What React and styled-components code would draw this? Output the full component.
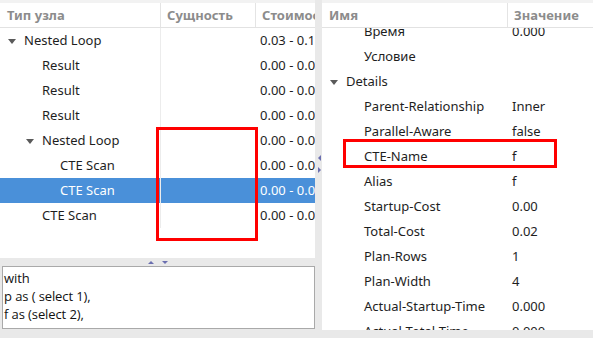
import { createGlobalStyle, styled } from 'styled-components';

const planRows = [
  { level: 0, open: true, name: 'Nested Loop', cost: '0.03 - 0.10' },
  { level: 1, name: 'Result', cost: '0.00 - 0.01' },
  { level: 1, name: 'Result', cost: '0.00 - 0.01' },
  { level: 1, name: 'Result', cost: '0.00 - 0.01' },
  { level: 1, open: true, name: 'Nested Loop', cost: '0.00 - 0.05' },
  { level: 2, name: 'CTE Scan', cost: '0.00 - 0.02' },
  { level: 2, name: 'CTE Scan', cost: '0.00 - 0.02', selected: true },
  { level: 1, name: 'CTE Scan', cost: '0.00 - 0.02' },
];

const props = [
  { level: 1, name: 'Время', value: '0.000' },
  { level: 1, name: 'Условие', value: '' },
  { level: 0, open: true, name: 'Details', value: '' },
  { level: 1, name: 'Parent-Relationship', value: 'Inner' },
  { level: 1, name: 'Parallel-Aware', value: 'false' },
  { level: 1, name: 'CTE-Name', value: 'f' },
  { level: 1, name: 'Alias', value: 'f' },
  { level: 1, name: 'Startup-Cost', value: '0.00' },
  { level: 1, name: 'Total-Cost', value: '0.02' },
  { level: 1, name: 'Plan-Rows', value: '1' },
  { level: 1, name: 'Plan-Width', value: '4' },
  { level: 1, name: 'Actual-Startup-Time', value: '0.000' },
  { level: 1, name: 'Actual-Total-Time', value: '0.000' },
];

const sqlLines = ['with', 'p as ( select 1),', 'f as (select 2),', 'x as ('];

function App() {
  return (
    <>
      <GlobalStyle />
      <StyledWindow>
        <StyledLeftColumn>
          <StyledTreePanel>
            <StyledHeader>
              <StyledHeadCell $width={160}>Тип узла</StyledHeadCell>
              <StyledHeadCell $width={95}>Сущность</StyledHeadCell>
              <StyledHeadCell $width={90}>Стоимость</StyledHeadCell>
            </StyledHeader>
            <StyledBody>
              {planRows.map((row, i) => (
                <StyledRow key={i} $selected={row.selected}>
                  <StyledNameCell $width={160} $level={row.level}>
                    {row.open && <StyledArrow $selected={row.selected} />}
                    {row.name}
                  </StyledNameCell>
                  <StyledCell $width={95} $grid />
                  <StyledCell $width={90}>{row.cost}</StyledCell>
                </StyledRow>
              ))}
            </StyledBody>
            <StyledMarker className={'entity-marker'} />
          </StyledTreePanel>
          <StyledHSplitter>
            <StyledTriangle $dir={'up'} />
            <StyledTriangle $dir={'down'} />
          </StyledHSplitter>
          <StyledEditor>
            {sqlLines.map((line, i) => (
              <div key={i}>{line}</div>
            ))}
          </StyledEditor>
        </StyledLeftColumn>

        <StyledVSplitter>
          <StyledTriangle $dir={'left'} />
          <StyledTriangle $dir={'right'} />
        </StyledVSplitter>

        <StyledPropsPanel>
          <StyledHeader>
            <StyledHeadCell $width={185}>Имя</StyledHeadCell>
            <StyledHeadCell $width={100}>Значение</StyledHeadCell>
          </StyledHeader>
          <StyledBody>
            <StyledScrolled>
              {props.map((row, i) => (
                <StyledRow key={i}>
                  <StyledNameCell $width={185} $level={row.level}>
                    {row.open && <StyledArrow />}
                    {row.name}
                  </StyledNameCell>
                  <StyledCell $width={100}>{row.value}</StyledCell>
                </StyledRow>
              ))}
            </StyledScrolled>
          </StyledBody>
          <StyledMarker className={'name-marker'} />
        </StyledPropsPanel>
      </StyledWindow>
    </>
  );
}

export default App;

const GlobalStyle = createGlobalStyle`
  html, body {
    margin: 0;
    padding: 0;
    background: #e9e9e9;
  }
  body {
    font-family: 'Noto Sans', 'Open Sans', sans-serif;
    font-size: 13px;
    color: #1e1e1e;
  }
`;

const StyledWindow = styled.div`
  display: flex;
  width: 593px;
  height: 338px;
  overflow: hidden;
  background: #e9e9e9;
`;

const StyledLeftColumn = styled.div`
  display: flex;
  flex-direction: column;
  width: 315px;
`;

const StyledTreePanel = styled.section`
  position: relative;
  height: 255px;
  background: #fff;
  border-top: 3px solid #f2f2f2;
  overflow: hidden;

  & .entity-marker {
    left: 156px;
    top: 124px;
    width: 96px;
    height: 108px;
  }
`;

const StyledPropsPanel = styled.section`
  position: relative;
  flex: 1;
  height: 327px;
  background: #fff;
  border-top: 3px solid #f2f2f2;
  overflow: hidden;

  & .name-marker {
    left: 21px;
    top: 136px;
    width: 208px;
    height: 23px;
  }
`;

const StyledHeader = styled.div`
  display: flex;
  height: 24px;
  border-bottom: 1px solid #e2e2e2;
  background: #fff;
  position: relative;
  z-index: 1;
`;

const StyledHeadCell = styled.div`
  flex: none;
  width: ${({ $width }) => $width}px;
  box-sizing: border-box;
  padding-left: 7px;
  line-height: 24px;
  font-weight: 700;
  color: #8c8c8c;
  white-space: nowrap;
  overflow: hidden;

  & + & {
    border-left: 1px solid #e4e4e4;
    padding-left: 6px;
  }
`;

const StyledBody = styled.div`
  overflow: hidden;
`;

const StyledScrolled = styled.div`
  margin-top: -9px;
`;

const StyledRow = styled.div`
  display: flex;
  height: 25px;
  align-items: center;
  background: ${({ $selected }) => ($selected ? '#4a90d9' : 'transparent')};
  color: ${({ $selected }) => ($selected ? '#fff' : '#1e1e1e')};
  white-space: nowrap;
`;

const StyledCell = styled.div`
  flex: none;
  width: ${({ $width }) => $width}px;
  height: 100%;
  box-sizing: border-box;
  padding-left: 5px;
  line-height: 25px;
  overflow: hidden;
  border-left: ${({ $grid }) => ($grid ? '1px solid #ececec' : 'none')};
`;

const StyledNameCell = styled.div`
  flex: none;
  position: relative;
  width: ${({ $width }) => $width}px;
  box-sizing: border-box;
  padding-left: ${({ $level }) => 24 + $level * 18}px;
  line-height: 25px;
  overflow: hidden;
`;

const StyledArrow = styled.span`
  position: absolute;
  top: 11px;
  margin-left: -16px;
  width: 0;
  height: 0;
  border-left: 4.5px solid transparent;
  border-right: 4.5px solid transparent;
  border-top: 5px solid ${({ $selected }) => ($selected ? '#fff' : '#5a5a5a')};
`;

const StyledMarker = styled.div`
  position: absolute;
  border: 3px solid #f00;
  z-index: 2;
  pointer-events: none;
`;

const StyledHSplitter = styled.div`
  display: flex;
  justify-content: center;
  align-items: center;
  gap: 8px;
  height: 8px;
  padding-right: 0;
`;

const StyledVSplitter = styled.div`
  display: flex;
  flex-direction: column;
  align-items: center;
  justify-content: center;
  gap: 6px;
  width: 7px;
  height: 330px;
  padding-left: 1px;
  padding-bottom: 2px;
  box-sizing: border-box;
`;

const StyledTriangle = styled.span`
  width: 0;
  height: 0;
  ${({ $dir }) =>
    $dir === 'up'
      ? 'border-left: 3.5px solid transparent; border-right: 3.5px solid transparent; border-bottom: 3px solid #6b6fb0;'
      : $dir === 'down'
      ? 'border-left: 3.5px solid transparent; border-right: 3.5px solid transparent; border-top: 3px solid #6b6fb0;'
      : $dir === 'left'
      ? 'border-top: 3.5px solid transparent; border-bottom: 3.5px solid transparent; border-right: 3px solid #6b6fb0;'
      : 'border-top: 3.5px solid transparent; border-bottom: 3.5px solid transparent; border-left: 3px solid #6b6fb0;'}
`;

const StyledEditor = styled.div`
  margin-left: 2px;
  height: 63px;
  box-sizing: border-box;
  border: 1px solid #a9a9a9;
  background: #fff;
  padding: 2px 0 0 1px;
  font-family: 'Open Sans', 'Noto Sans', sans-serif;
  font-size: 13px;
  letter-spacing: -0.1px;
  line-height: 18px;
  color: #111;
  overflow: hidden;
  white-space: pre;
`;
